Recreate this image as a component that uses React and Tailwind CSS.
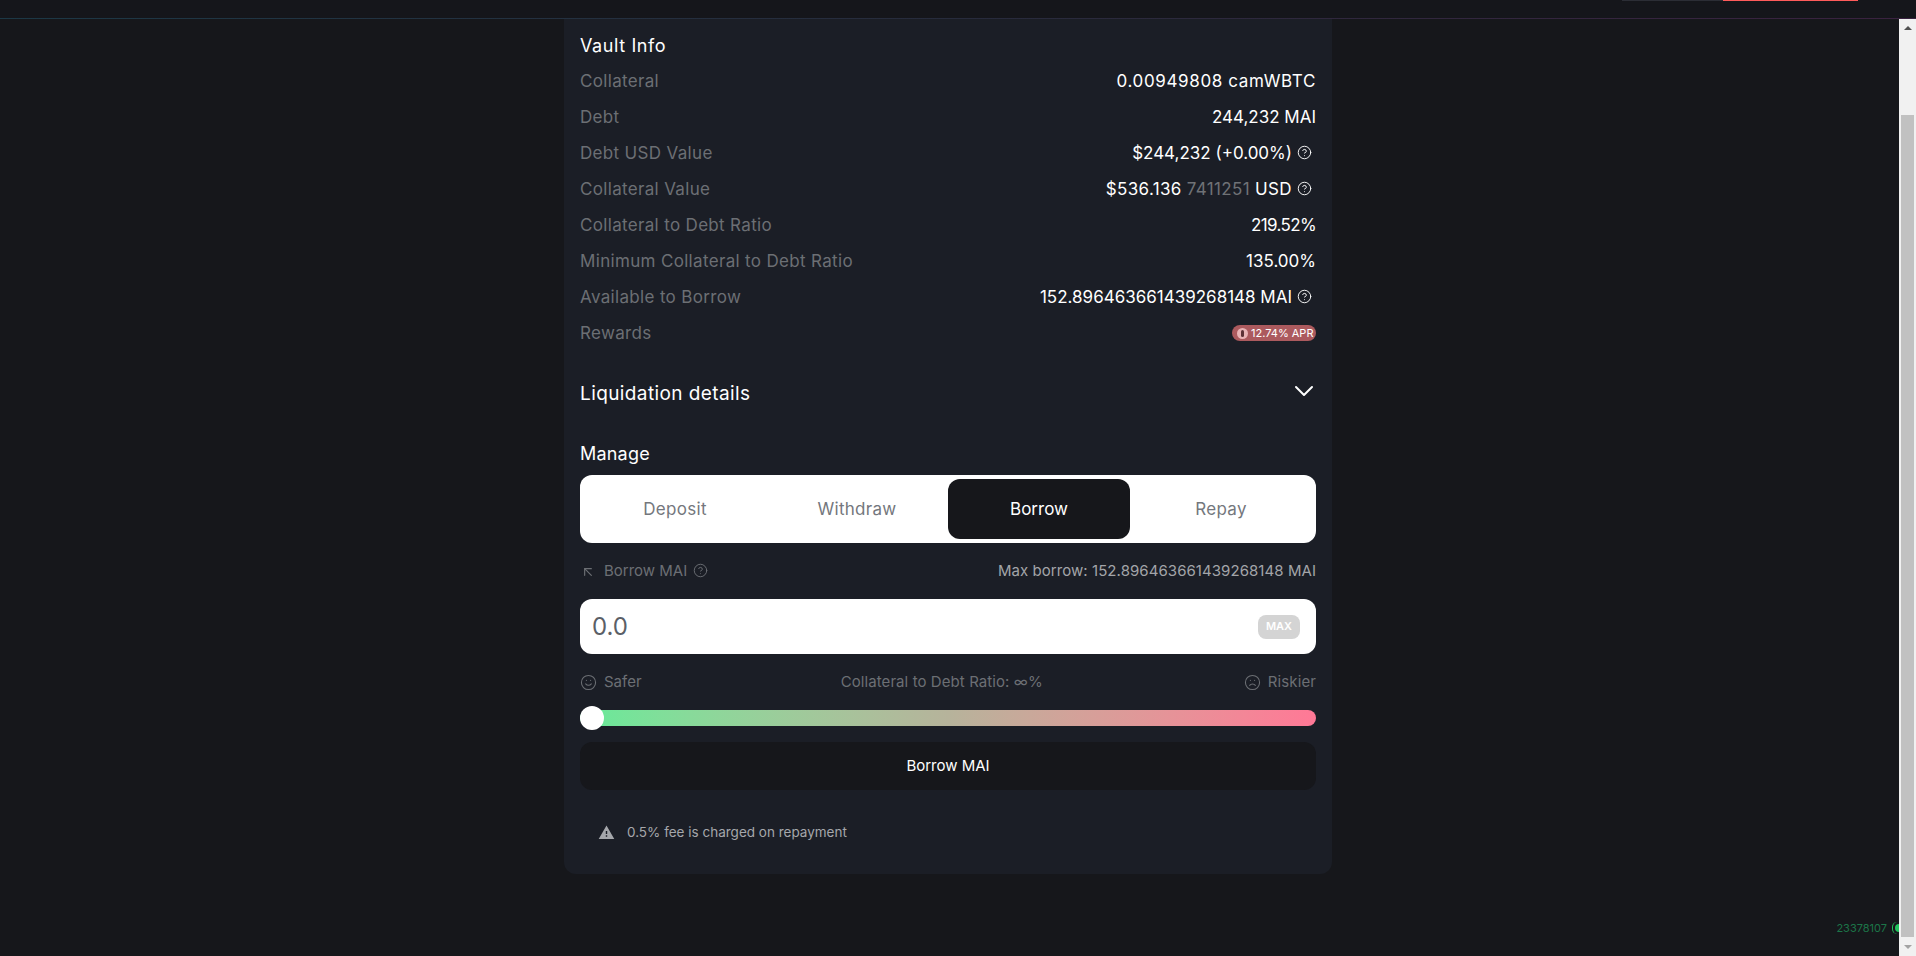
import { ArrowUpLeft, ChevronDown, CircleHelp, Frown, Smile } from 'lucide-react';

const Help = ({ className = '' }) => (
  <CircleHelp size={15} strokeWidth={1.5} className={`text-white ${className}`} />
);

const rows = [
  { label: 'Collateral', value: <span className="tracking-[0.63px]">0.00949808 camWBTC</span> },
  { label: 'Debt', value: <span>244,232 MAI</span> },
  { label: 'Debt USD Value', value: <span>$244,232 (+0.00%)</span>, help: true },
  {
    label: 'Collateral Value',
    value: (
      <span className="tracking-[0.35px]">
        $536.136 <span className="text-[#6f7276]">7411251</span> USD
      </span>
    ),
    help: true,
  },
  { label: 'Collateral to Debt Ratio', value: <span className="tracking-[-0.65px]">219.52%</span> },
  { label: 'Minimum Collateral to Debt Ratio', value: <span>135.00%</span> },
  { label: 'Available to Borrow', value: <span>152.896463661439268148 MAI</span>, help: true },
];

const tabs = ['Deposit', 'Withdraw', 'Borrow', 'Repay'];

const App = () => {
  return (
    <div className="h-screen overflow-hidden flex flex-col bg-[#16171b] font-['Inter','Liberation_Sans',sans-serif] text-white">
      {/* top bar, scrolled almost out of view */}
      <div className="h-[18px] flex justify-end items-start pr-[58px] bg-[#15161b]">
        <div className="w-[101px] h-px bg-[#2b2d35]"></div>
        <div className="w-[135px] h-px bg-[#ff5b5b]"></div>
      </div>
      <div className="h-px bg-gradient-to-r from-[#1c3846] via-[#272b3c] to-[#3a2240]"></div>

      <div className="flex flex-1 min-h-0">
        <div className="relative flex-1 pr-[3px] overflow-hidden">
          <div className="w-[768px] mx-auto bg-[#1b1e26] rounded-b-xl px-4 pt-2 pb-[30px]">
            <div className="h-9 flex items-center text-[18px] tracking-[0.6px]">Vault Info</div>

            {rows.map((row) => (
              <div key={row.label} className="h-9 pt-[2px] flex items-center justify-between text-[17px]">
                <span className="text-[#6c6f74] tracking-[0.33px]">{row.label}</span>
                <div className="flex items-center">
                  {row.value}
                  {row.help && <Help className="ml-[5px] mr-[4px] -mt-[4px]" />}
                </div>
              </div>
            ))}

            <div className="h-9 flex items-center justify-between text-[17px]">
              <span className="pt-[2px] text-[#6c6f74] tracking-[0.33px]">Rewards</span>
              <div className="h-4 w-[84px] flex items-center gap-[3px] pl-[5px] rounded-full bg-[#ac5a5e] text-[11px] text-white">
                <span className="w-[11px] h-[11px] rounded-full bg-[#e9b4b6] flex items-center justify-center">
                  <span className="w-[3px] h-[7px] rounded-full bg-[#5d3236]"></span>
                </span>
                12.74% APR
              </div>
            </div>

            <div className="h-9 mt-6 flex items-center justify-between text-[19px] tracking-[0.4px]">
              <span className="pt-[2px]">Liquidation details</span>
              <ChevronDown size={32} strokeWidth={1.5} className="-mr-[4px] -mt-[4px]" />
            </div>

            <div className="h-9 mt-6 mb-1 flex items-center text-[18px] tracking-[0.2px]">Manage</div>

            <div className="h-[68px] p-1 grid grid-cols-4 rounded-xl bg-white text-[17px]">
              {tabs.map((tab) => (
                <div
                  key={tab}
                  className={
                    tab === 'Borrow'
                      ? 'pt-[2px] flex items-center justify-center rounded-xl bg-[#16171b] text-white'
                      : 'pt-[2px] flex items-center justify-center text-[#74777d] tracking-[0.3px]'
                  }
                >
                  {tab}
                </div>
              ))}
            </div>

            <div className="h-9 mt-[10px] flex items-center justify-between text-[15px]">
              <div className="flex items-center text-[#6c6f74]">
                <ArrowUpLeft size={16} strokeWidth={1.75} className="mr-[8px] mt-px" />
                <span>Borrow MAI</span>
                <CircleHelp size={15} strokeWidth={1.5} className="ml-[6px] -mt-[2px]" />
              </div>
              <span className="text-[#a3a5a9] tracking-[0.06px]">Max borrow: 152.896463661439268148 MAI</span>
            </div>

            <div className="h-[55px] mt-[10px] pl-3 pr-4 flex items-center justify-between rounded-xl bg-white">
              <span className="text-2xl text-[#5b5f67]">0.0</span>
              <button className="w-[42px] h-6 rounded-lg bg-[#d4d4d4] text-[11px] font-semibold text-white">MAX</button>
            </div>

            <div className="h-9 mt-[10px] flex items-center justify-between text-[15px] text-[#6c6f74]">
              <div className="flex items-center gap-[7px]">
                <Smile size={17} strokeWidth={1.5} />
                <span>Safer</span>
              </div>
              <span className="-ml-[2px] tracking-[0.08px]">Collateral to Debt Ratio: ∞%</span>
              <div className="flex items-center gap-[7px]">
                <Frown size={17} strokeWidth={1.5} />
                <span className="tracking-[0.1px]">Riskier</span>
              </div>
            </div>

            <div className="relative h-4 mt-[10px] rounded-full bg-gradient-to-r from-[#66ea99] via-[#b6b39b] to-[#ff7896]">
              <div className="absolute left-0 top-[-4px] w-6 h-6 rounded-full bg-white"></div>
            </div>

            <button className="w-full h-12 mt-4 rounded-xl bg-[#16171b] text-[15px] text-white">Borrow MAI</button>

            <div className="h-6 mt-[30px] pl-[18px] flex items-center text-[13.5px] text-[#a5a7ab]">
              <svg width="17" height="17" viewBox="0 0 24 24" fill="currentColor" className="mr-[12px]">
                <path d="M1 21h22L12 2 1 21zm12-3h-2v-2h2v2zm0-4h-2v-4h2v4z" />
              </svg>
              <span>0.5% fee is charged on repayment</span>
            </div>
          </div>

          {/* block number overlay */}
          <div className="absolute -right-[3px] bottom-[20px] flex items-center text-[11px] text-[#1c7548]">
            <span>23378107</span>
            <span className="relative ml-[5px] w-[10px] h-[12px] rounded-full border-l border-[#22c55e]">
              <span className="absolute left-[2px] top-[2px] w-2 h-2 rounded-full bg-[#22c55e]"></span>
            </span>
          </div>
        </div>

        {/* browser scrollbar */}
        <div className="w-[17px] flex flex-col items-center bg-[#f1f1f1]">
          <div className="h-[17px] flex items-center justify-center">
            <div className="w-0 h-0 border-x-[4px] border-x-transparent border-b-[4px] border-b-[#505050]"></div>
          </div>
          <div className="w-[13px] mt-[79px] flex-1 bg-[#c1c1c1]"></div>
          <div className="h-[19px] flex items-center justify-center">
            <div className="w-0 h-0 border-x-[4px] border-x-transparent border-t-[4px] border-t-[#a3a3a3]"></div>
          </div>
        </div>
      </div>
    </div>
  );
};

export default App;
